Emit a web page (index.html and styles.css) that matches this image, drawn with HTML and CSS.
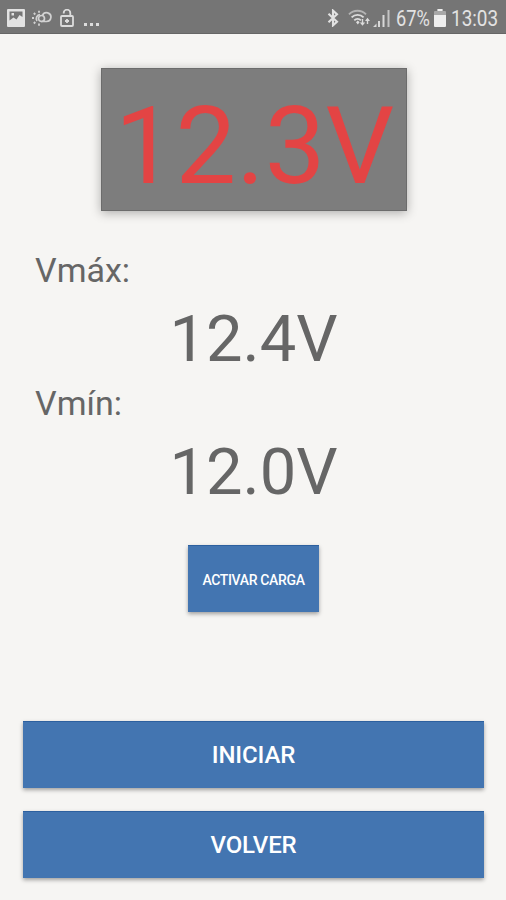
FILE: index.html
```
<!DOCTYPE html>
<html lang="es">

<head>
    <meta charset="UTF-8">
    <meta name="viewport" content="width=device-width, initial-scale=1.0">
    <title>Voltímetro</title>
    <link rel="stylesheet" href="styles.css">
</head>

<body>

    <header class="status-bar">
        <div class="status-left">
            <svg class="icon-picture" width="18" height="18" viewBox="0 0 18 18">
                <path fill="#e2e2e2" fill-rule="evenodd" d="M1 0h16q1 0 1 1v16q0 1-1 1H1q-1 0-1-1V1q0-1 1-1zM2.5 2.5v9l4-3 3 2 3-4.5 3 2V2.5z"/>
                <rect x="4.5" y="4" width="2.5" height="2.5" fill="#e2e2e2"/>
            </svg>
            <svg class="icon-weather" width="20" height="16" viewBox="0 0 20 16" fill="none" stroke="#d2d2d2" stroke-width="1.7">
                <path d="M9 11.5h5.5a4.4 4.4 0 1 0-4-6.2"/>
                <circle cx="9.5" cy="8.5" r="3"/>
                <path d="M5 11a4 4 0 0 1 3-6.3"/>
                <path d="M0 8h2M1.8 3l1.5 1.5M7 .8v2M1.8 13.5l1.5-1.5M7 13.5v2.3" stroke-width="1.8"/>
            </svg>
            <svg class="icon-lock" width="14" height="18" viewBox="0 0 14 18" fill="none" stroke="#dcdcdc" stroke-width="1.8">
                <rect x="1" y="7" width="12" height="10" rx="1"/>
                <path d="M3.7 4.5V4a3.2 3.2 0 0 1 6.6 0v3"/>
                <path d="M7 10v4M5 12h4"/>
            </svg>
            <span class="dots"><i></i><i></i><i></i></span>
        </div>
        <div class="status-right">
            <svg class="icon-bluetooth" width="12" height="18" viewBox="0 0 12 18" fill="none" stroke="#e2e2e2" stroke-width="2.1">
                <path d="M1.5 4.8l8.5 8L6 16.4V1.6l4 3.6-8.5 8"/>
            </svg>
            <svg class="icon-wifi" width="23" height="18" viewBox="0 0 23 18" fill="none">
                <path stroke="#b4b4b4" stroke-width="1.9" d="M1 5.3a12 12 0 0 1 17 0"/>
                <path stroke="#dcdcdc" stroke-width="1.9" d="M3.6 8.4a8.4 8.4 0 0 1 12 0M6.3 11.3a4.6 4.6 0 0 1 6.6 0"/>
                <path stroke="#dcdcdc" stroke-width="1.4" d="M14.5 10v5M19.5 10v5"/>
                <path fill="#dcdcdc" d="M8 13.2l1.8-1.6 1.8 1.6-1.8 2.3zM11.8 13.5h5.4l-2.7 3.2zM17 12h5l-2.5-3.2z"/>
            </svg>
            <svg class="icon-signal" width="17" height="17" viewBox="0 0 17 17" fill="#d8d8d8">
                <path d="M0 17l3.5-3.5V17zM5 11h2v6H5zM9.5 5h2v12h-2z"/>
                <path fill="#c4c4c4" d="M14.5 0h2v17h-2z"/>
            </svg>
            <span class="percent">67%</span>
            <svg class="icon-battery" width="12" height="18" viewBox="0 0 12 18">
                <path fill="#a8a8a8" d="M3.5 0h5v2H11q1 0 1 1v4H0V3q0-1 1-1h2.5z"/>
                <path fill="#eee" d="M0 6h12v11q0 1-1 1H1q-1 0-1-1zM3.5 0h5v2h-5z"/>
            </svg>
            <span class="clock">13:03</span>
        </div>
    </header>

    <main class="content">
        <div class="display">12.3V</div>

        <div class="label">Vmáx:</div>
        <div class="value">12.4V</div>
        <div class="label">Vmín:</div>
        <div class="value">12.0V</div>

        <button class="load-button">ACTIVAR CARGA</button>

        <div class="actions">
            <button>INICIAR</button>
            <button>VOLVER</button>
        </div>
    </main>

</body>

</html>
```
FILE: styles.css
```
body {
    font-family: Roboto, sans-serif;
    margin: 0;
    height: 900px;
    display: flex;
    flex-direction: column;
    background: #f6f5f3;
    color: #666;
    overflow: hidden;
}

/* status bar */

.status-bar {
    display: flex;
    justify-content: space-between;
    box-sizing: border-box;
    height: 34px;
    padding: 0 8px 0 7px;
    background: #757575;
    border-bottom: 1px solid #666;
    color: #e2e2e2;
    font-size: 22px;
    line-height: 37px;
}

.status-left,
.status-right {
    display: flex;
    align-items: center;
    height: 36px;
}

.status-bar svg {
    flex: none;
}

.icon-weather {
    margin-left: 7px;
}

.icon-lock {
    margin-left: 8px;
}

.dots {
    display: flex;
    gap: 3px;
    margin: 12px 0 0 10px;
}

.dots i {
    width: 3px;
    height: 3px;
    background: #dcdcdc;
}

.icon-wifi {
    margin-left: 9px;
}

.icon-signal {
    margin-left: 2px;
}

.percent,
.clock {
    transform: scaleX(0.83);
    transform-origin: left;
}

.percent {
    width: 34px;
    margin-left: 6px;
}

.icon-battery {
    margin-left: 4px;
}

.clock {
    width: 47px;
    margin-left: 5px;
    transform: scaleX(0.86);
}

/* readings */

.content {
    flex: 1;
    display: flex;
    flex-direction: column;
    padding: 34px 22px 22px 23px;
}

.display {
    align-self: center;
    box-sizing: border-box;
    width: 306px;
    height: 143px;
    margin-bottom: 39px;
    padding: 7px 0 0 2px;
    background: #7d7d7d;
    color: #e34444;
    font-size: 108px;
    line-height: 143px;
    text-align: center;
    box-shadow: inset 0 0 0 1px #6c6c6c, 0 2px 10px rgba(0, 0, 0, 0.3);
}

.label {
    margin: 0 0 11px 12px;
    font-size: 34px;
    line-height: 40px;
}

.value {
    margin-bottom: 6px;
    font-size: 65px;
    line-height: 76px;
    text-align: center;
}

/* buttons */

button {
    height: 67px;
    padding: 0;
    border: none;
    background: #4375b1;
    color: white;
    font-family: inherit;
    font-size: 24px;
    font-weight: 500;
    letter-spacing: -0.1px;
    cursor: pointer;
    box-shadow: inset 0 1px 0 #2d609f, 0 2px 4px rgba(0, 0, 0, 0.35);
}

.load-button {
    align-self: center;
    width: 131px;
    margin-top: 29px;
    padding-top: 2px;
    font-size: 14px;
    letter-spacing: -0.35px;
}

.actions {
    display: flex;
    flex-direction: column;
    gap: 23px;
    margin-top: auto;
}
```
